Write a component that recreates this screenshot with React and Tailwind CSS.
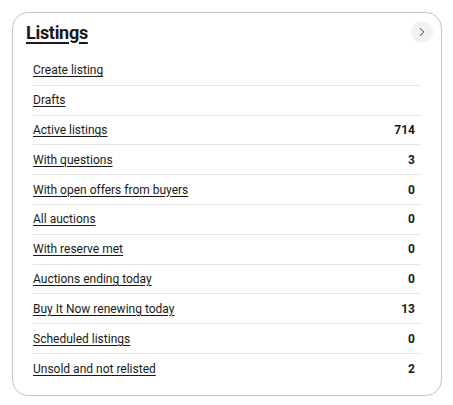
import React from 'react'
import { ChevronRight } from 'lucide-react'

const rows = [
    { label: 'Create listing' },
    { label: 'Drafts' },
    { label: 'Active listings', count: 714 },
    { label: 'With questions', count: 3 },
    { label: 'With open offers from buyers', count: 0 },
    { label: 'All auctions', count: 0 },
    { label: 'With reserve met', count: 0 },
    { label: 'Auctions ending today', count: 0 },
    { label: 'Buy It Now renewing today', count: 13 },
    { label: 'Scheduled listings', count: 0 },
    { label: 'Unsold and not relisted', count: 2 },
]

export default function App() {
    return (
        <div className="w-[453px] h-[405px] bg-white pt-3 pl-3 font-['Roboto',sans-serif] text-[#191919]">
            <div className="w-[430px] h-[384px] rounded-2xl border border-[#c7c7c7]">

                {/* Header */}
                <div className="flex items-center justify-between pl-[13px] pr-[8px] h-[38px]">
                    <h2 className="text-[18px] font-bold underline underline-offset-[3px] decoration-[1.5px] tracking-[-0.3px]">
                        Listings
                    </h2>
                    <button className="w-[22px] h-[22px] rounded-full bg-[#f2f2f2] flex items-center justify-center text-[#191919]">
                        <ChevronRight className="w-[14px] h-[14px]" strokeWidth={1.5} />
                    </button>
                </div>

                {/* List */}
                <ul className="mx-[20px] mt-[5px]">
                    {rows.map((r, i) => (
                        <li
                            key={r.label}
                            className={`h-[29.8px] flex items-center justify-between text-[12px] ${i < rows.length - 1 ? 'border-b border-[#e5e5e5]' : ''}`}
                        >
                            <a href="#" className="underline underline-offset-2">{r.label}</a>
                            {r.count !== undefined && (
                                <span className="font-bold pr-[6px]">{r.count}</span>
                            )}
                        </li>
                    ))}
                </ul>
            </div>
        </div>
    )
}
